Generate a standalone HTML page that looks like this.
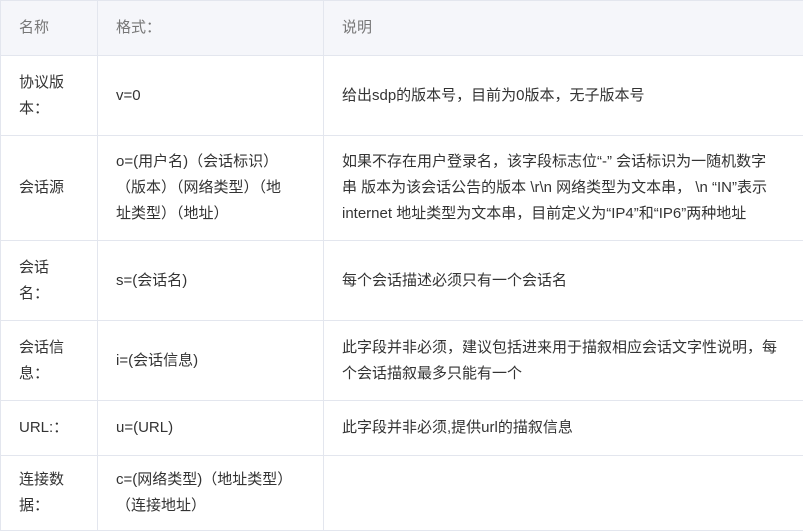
<!DOCTYPE html><html><head><meta charset="utf-8"><style>
*{margin:0;padding:0;box-sizing:border-box}
body{width:803px;height:530px;background:#fff;overflow:hidden;font-family:"Liberation Sans","WenQuanYi Zen Hei",sans-serif;font-size:15px;color:#333}
table{border-collapse:collapse;position:absolute;left:0;top:0;width:804px;table-layout:fixed}
td,th{border:1px solid #e3e6ee;padding:0 0 0 18px;line-height:26px;text-align:left;font-weight:normal;vertical-align:middle;white-space:nowrap;overflow:hidden}
th{background:#f5f6fa;color:#777}
</style></head><body>
<table>
<colgroup><col style="width:97px"><col style="width:226px"><col style="width:481px"></colgroup>
<tr style="height:55px"><th>名称</th><th>格式：</th><th>说明</th></tr>
<tr style="height:80px"><td>协议版<br>本：</td><td>v=0</td><td>给出sdp的版本号，目前为0版本，无子版本号</td></tr>
<tr style="height:105px"><td>会话源</td><td>o=(用户名)（会话标识）<br>（版本）（网络类型）（地<br>址类型）（地址）</td><td>如果不存在用户登录名，该字段标志位“-” 会话标识为一随机数字<br>串 版本为该会话公告的版本 \r\n 网络类型为文本串， \n “IN”表示<br>internet 地址类型为文本串，目前定义为“IP4”和“IP6”两种地址</td></tr>
<tr style="height:80px"><td>会话<br>名：</td><td>s=(会话名)</td><td>每个会话描述必须只有一个会话名</td></tr>
<tr style="height:80px"><td>会话信<br>息：</td><td>i=(会话信息)</td><td>此字段并非必须，建议包括进来用于描叙相应会话文字性说明，每<br>个会话描叙最多只能有一个</td></tr>
<tr style="height:55px"><td>URL:：</td><td>u=(URL)</td><td>此字段并非必须,提供url的描叙信息</td></tr>
<tr style="height:75px"><td>连接数<br>据：</td><td>c=(网络类型)（地址类型）<br>（连接地址）</td><td></td></tr>
</table>
</body></html>
